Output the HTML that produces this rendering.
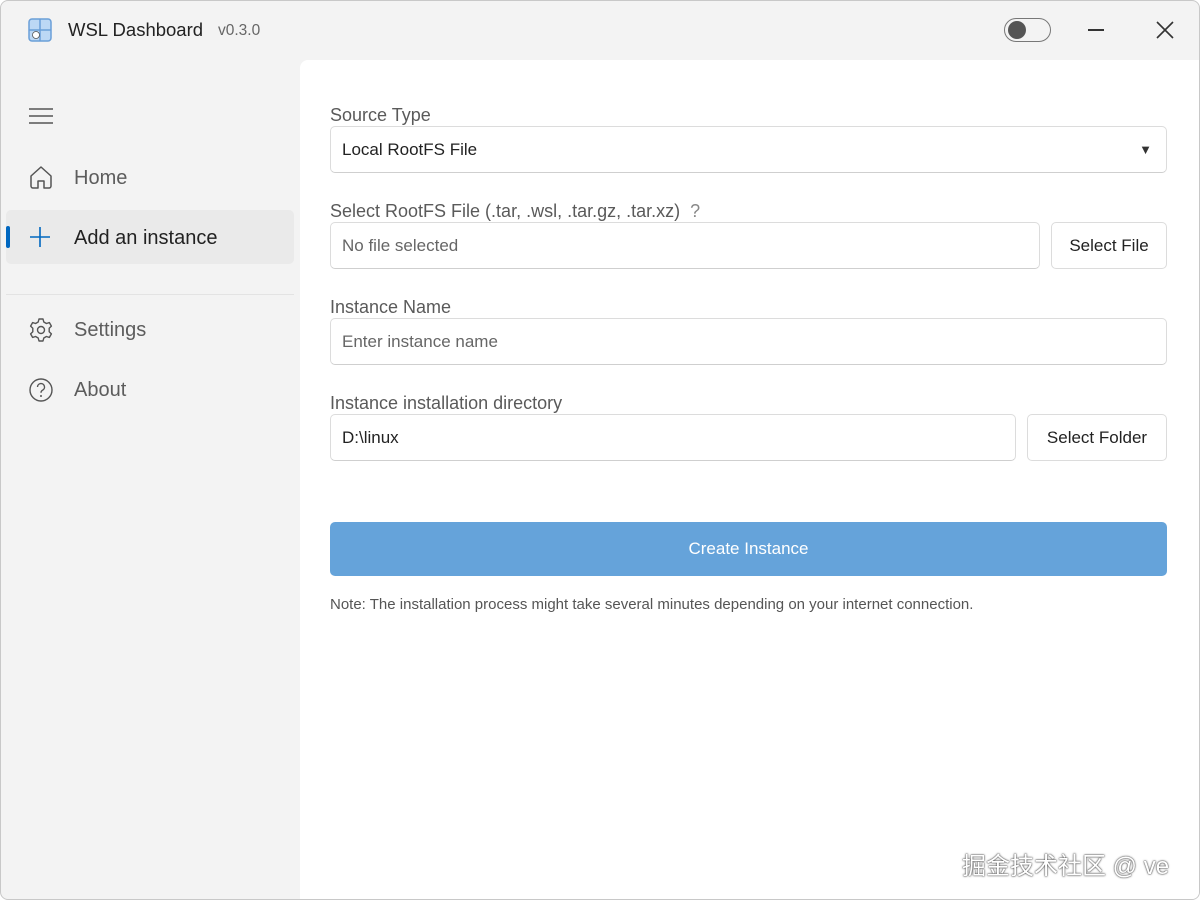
<!DOCTYPE html>
<html><head><meta charset="utf-8"><style>
*{box-sizing:border-box;margin:0;padding:0}
body{width:1200px;height:900px;background:#fff;font-family:"Liberation Sans","Noto Sans CJK SC",sans-serif;overflow:hidden;position:relative}
.win{position:absolute;left:0;top:0;width:1200px;height:900px;background:#f3f3f3;border:1px solid #c8c8c8;border-radius:8px;overflow:hidden}
.abs{position:absolute}
.panel{position:absolute;left:299px;top:59px;width:900px;height:840px;background:#fff;border-top-left-radius:8px}
.nav{position:absolute;left:73px;font-size:20px;color:#5c5c5c}
.lbl{position:absolute;left:329px;font-size:18px;color:#5a5a5a}
.box{position:absolute;height:47px;border:1px solid #dcdcdc;border-bottom-color:#cfcfcf;border-radius:5px;background:#fff;font-size:17px;color:#222;padding-left:11px;line-height:45px}
.btn{position:absolute;height:47px;border:1px solid #dcdcdc;border-radius:5px;background:#fff;font-size:17px;color:#222;text-align:center;line-height:45px}
</style></head><body>
<div class="win">
<svg class="abs" style="left:27px;top:17px" width="24" height="24" viewBox="0 0 24 24"><rect x="1" y="1" width="22" height="22" rx="3" fill="#bcd8f5" stroke="#6a9fd8" stroke-width="1.5"/><path d="M12 1v22M1 12h22" stroke="#6a9fd8" stroke-width="1.5"/><circle cx="8" cy="17" r="3.5" fill="#fff" stroke="#555" stroke-width="0.8"/></svg>
<div class="abs" style="left:67px;top:18px;font-size:18.5px;color:#222">WSL Dashboard</div>
<div class="abs" style="left:217px;top:21px;font-size:15.5px;color:#666">v0.3.0</div>
<div class="abs" style="left:1003px;top:17px;width:47px;height:24px;border:1.5px solid #777;border-radius:12px"></div>
<div class="abs" style="left:1007px;top:20px;width:18px;height:18px;border-radius:50%;background:#555"></div>
<div class="abs" style="left:1087px;top:28px;width:16px;height:1.5px;background:#333"></div>
<svg class="abs" style="left:1155px;top:20px" width="18" height="18"><path d="M1 1L17 17M17 1L1 17" stroke="#333" stroke-width="1.6"/></svg>

<svg class="abs" style="left:27px;top:106px" width="26" height="20"><path d="M1 2h24M1 9h24M1 16h24" stroke="#555" stroke-width="1.4"/></svg>
<svg class="abs" style="left:27px;top:163px" width="26" height="26" viewBox="0 0 26 26"><path d="M3 12L13 3l10 9v10a2 2 0 0 1-2 2h-5v-7h-6v7H5a2 2 0 0 1-2-2z" fill="none" stroke="#555" stroke-width="1.5" stroke-linejoin="round"/></svg>
<div class="nav" style="top:166px">Home</div>
<div class="abs" style="left:5px;top:209px;width:288px;height:54px;background:#eaeaea;border-radius:5px"></div>
<div class="abs" style="left:5px;top:225px;width:4px;height:22px;background:#0067c0;border-radius:2px"></div>
<svg class="abs" style="left:28px;top:225px" width="22" height="22"><path d="M11 1v20M1 11h20" stroke="#0067c0" stroke-width="1.6"/></svg>
<div class="nav" style="top:226px;color:#222">Add an instance</div>
<div class="abs" style="left:5px;top:293px;width:288px;height:1px;background:#e3e3e3"></div>
<svg class="abs" style="left:27px;top:316px" width="26" height="26" viewBox="0 0 26 26"><circle cx="13" cy="13" r="3.5" fill="none" stroke="#555" stroke-width="1.4"/><path d="M11 2h4l.8 3 2.6 1.5 3-.9 2 3.5-2.2 2.1v3.6l2.2 2.1-2 3.5-3-.9-2.6 1.5-.8 3h-4l-.8-3-2.6-1.5-3 .9-2-3.5 2.2-2.1v-3.6L2.6 9.1l2-3.5 3 .9L10.2 5z" fill="none" stroke="#555" stroke-width="1.4" stroke-linejoin="round"/></svg>
<div class="nav" style="top:318px">Settings</div>
<svg class="abs" style="left:27px;top:376px" width="26" height="26" viewBox="0 0 26 26"><circle cx="13" cy="13" r="11" fill="none" stroke="#555" stroke-width="1.4"/><path d="M9.5 10a3.5 3.5 0 1 1 5 3.2c-1 .6-1.5 1.2-1.5 2.5" fill="none" stroke="#555" stroke-width="1.4"/><circle cx="13" cy="19" r="1" fill="#555"/></svg>
<div class="nav" style="top:378px">About</div>

<div class="panel"></div>
<div class="lbl" style="top:104px">Source Type</div>
<div class="box" style="left:329px;top:125px;width:837px">Local RootFS File<span style="position:absolute;right:14px;font-size:13px;color:#333">▼</span></div>
<div class="lbl" style="top:200px">Select RootFS File (.tar, .wsl, .tar.gz, .tar.xz) &nbsp;<span style="color:#888">?</span></div>
<div class="box" style="left:329px;top:221px;width:710px;color:#666">No file selected</div>
<div class="btn" style="left:1050px;top:221px;width:116px">Select File</div>
<div class="lbl" style="top:296px">Instance Name</div>
<div class="box" style="left:329px;top:317px;width:837px;color:#666">Enter instance name</div>
<div class="lbl" style="top:392px">Instance installation directory</div>
<div class="box" style="left:329px;top:413px;width:686px">D:\linux</div>
<div class="btn" style="left:1026px;top:413px;width:140px">Select Folder</div>
<div class="abs" style="left:329px;top:521px;width:837px;height:54px;background:#65a3da;border-radius:5px;color:#fff;font-size:17px;text-align:center;line-height:54px">Create Instance</div>
<div class="abs" style="left:329px;top:595px;font-size:15px;color:#555">Note: The installation process might take several minutes depending on your internet connection.</div>
<div class="abs" style="left:961px;top:845px;font-size:24px;color:#fff;text-shadow:0 0 2px #444,0 0 1px #222">掘金技术社区 @ ve</div>
</div>
</body></html>
